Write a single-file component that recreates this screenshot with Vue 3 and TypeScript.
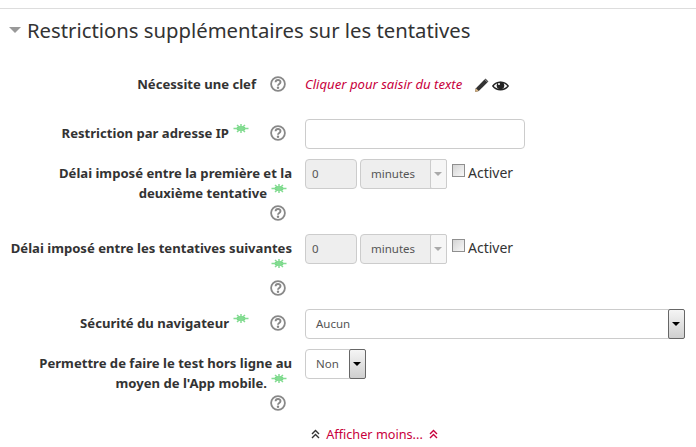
<script setup lang="ts">
interface Row {
  lines: string[]
  required: boolean
  stacked: boolean
  kind: string
}

const rows: Row[] = [
  { lines: ['Nécessite une clef'], required: false, stacked: false, kind: 'inline-edit' },
  { lines: ['Restriction par adresse IP'], required: true, stacked: false, kind: 'text' },
  { lines: ['Délai imposé entre la première et la', 'deuxième tentative'], required: true, stacked: true, kind: 'duration' },
  { lines: ['Délai imposé entre les tentatives suivantes', ''], required: true, stacked: true, kind: 'duration' },
  { lines: ['Sécurité du navigateur'], required: true, stacked: false, kind: 'browser' },
  { lines: ['Permettre de faire le test hors ligne au', "moyen de l'App mobile."], required: true, stacked: true, kind: 'offline' },
]
</script>

<template>
  <div class="page">
    <h2 class="section-title">
      <span class="caret"></span>
      Restrictions supplémentaires sur les tentatives
    </h2>

    <div class="form">
      <div v-for="(row, i) in rows" :key="i" class="row" :class="'row-' + row.kind">
        <div class="label-col">
          <template v-for="(line, j) in row.lines" :key="j">
            <br v-if="j > 0" />
            <span class="label-text">{{ line }}</span>
          </template>
          <svg v-if="row.required" class="req" width="16" height="9" viewBox="0 0 16 9">
            <ellipse cx="8" cy="4.500" rx="4.500" ry="2.500" fill="#6ed47f" />
            <path d="M.5 4.500h15M4 1l8 7M12 1L4 8M8 0v9" stroke="#84dc92" stroke-width="1.500" fill="none" />
          </svg>
          <br v-if="row.stacked" />
          <svg class="help" :class="{ 'help-stacked': row.stacked }" width="16" height="16" viewBox="0 0 16 16">
            <circle cx="8" cy="8" r="6.900" fill="none" stroke="#888" stroke-width="1.800" />
            <path d="M5.600 6.300c0-3.100 4.900-3.100 4.900-.2 0 1.900-2.500 1.900-2.500 3.700" fill="none" stroke="#888" stroke-width="1.900" />
            <circle cx="8" cy="11.800" r="1.200" fill="#888" />
          </svg>
        </div>

        <div class="field-col">
          <template v-if="row.kind === 'inline-edit'">
            <span class="click-text">Cliquer pour saisir du texte</span>
            <svg class="pencil" width="15" height="15" viewBox="0 0 14 14">
              <path d="M1 13l.8-3.500L9.800 1.500l2.700 2.700-8 8z" fill="#333" />
              <path d="M1 13l.8-3.500 2.700 2.700z" fill="#d9b380" />
              <path d="M9.800 1.500l1-1 2.700 2.700-1 1z" fill="#555" />
            </svg>
            <svg class="eye" width="17" height="12" viewBox="0 0 17 12">
              <path d="M.8 6C4.500 1 12.500 1 16.200 6 12.500 11 4.500 11 .8 6z" fill="#fff" stroke="#222" stroke-width="1.300" />
              <circle cx="8.500" cy="5.500" r="3.800" fill="#222" />
              <circle cx="7" cy="4" r="1" fill="#fff" />
            </svg>
          </template>

          <div v-else-if="row.kind === 'text'" class="text-input"></div>

          <template v-else-if="row.kind === 'duration'">
            <div class="number-box">0</div>
            <div class="select disabled unit">
              <span class="value">minutes</span>
              <span class="arrow"></span>
            </div>
            <input class="check" type="checkbox" />
            <span class="check-label">Activer</span>
          </template>

          <div v-else-if="row.kind === 'browser'" class="select wide">
            <span class="value">Aucun</span>
            <span class="arrow"></span>
          </div>

          <div v-else class="select small">
            <span class="value">Non</span>
            <span class="arrow"></span>
          </div>
        </div>
      </div>
    </div>

    <div class="more-link">
      <svg width="9" height="10" viewBox="0 0 9 10">
        <path d="M1 5l3.500-3.500L8 5M1 9l3.500-3.500L8 9" fill="none" stroke="#333" stroke-width="1.400" />
      </svg>
      <span class="more-text">Afficher moins...</span>
      <svg width="9" height="10" viewBox="0 0 9 10">
        <path d="M1 5l3.500-3.500L8 5M1 9l3.500-3.500L8 9" fill="none" stroke="#c8003c" stroke-width="1.400" />
      </svg>
    </div>
  </div>
</template>

<style>
html,
body {
  margin: 0;
  background: #fff;
}
</style>

<style scoped>
.page {
  width: 696px;
  height: 447px;
  overflow: hidden;
  box-sizing: border-box;
  padding-top: 8px;
  font-family: "Noto Sans", "Open Sans", sans-serif;
  color: #333;
}

.section-title {
  margin: 0;
  height: 41px;
  padding-left: 9px;
  border-top: 1px solid #ddd;
  display: flex;
  align-items: center;
  gap: 6px;
  font-size: 20.300px;
  font-weight: 400;
  color: #333;
  white-space: nowrap;
}

.caret {
  width: 0;
  height: 0;
  border-left: 6px solid transparent;
  border-right: 6px solid transparent;
  border-top: 6px solid #999;
}

.form {
  padding-top: 20px;
}

.row {
  display: flex;
  align-items: flex-start;
}

.row-inline-edit {
  height: 49px;
}

.row-text {
  height: 40px;
}

.row-duration {
  height: 75px;
}

.row-browser {
  height: 40px;
}

.row-offline {
  height: 75px;
}

.label-col {
  width: 292px;
  flex: none;
  text-align: right;
  font-size: 13.100px;
  font-weight: 700;
  line-height: 20px;
  padding-top: 4px;
  color: #333;
}

.req {
  margin-left: 4px;
  margin-right: 5px;
  vertical-align: 5px;
}

.help {
  margin-left: 14px;
  margin-right: 6px;
  vertical-align: -3px;
}

.req + .help {
  margin-left: 16px;
}

.help-stacked,
.req + br + .help {
  margin-left: 0;
  margin-top: 2px;
}

.field-col {
  margin-left: 13px;
  display: flex;
  align-items: flex-start;
}

.click-text {
  font-size: 13.150px;
  font-style: italic;
  color: #c8003c;
  margin-top: 5px;
}

.pencil {
  margin: 8px 0 0 12px;
}

.eye {
  margin: 10px 0 0 3px;
}

.text-input {
  width: 220px;
  height: 30px;
  box-sizing: border-box;
  border: 1px solid #ccc;
  border-radius: 4px;
}

.number-box {
  width: 52px;
  height: 30px;
  box-sizing: border-box;
  padding: 0 6px;
  line-height: 28px;
  font-size: 11.500px;
  background: #eee;
  border: 1px solid #ccc;
  border-radius: 4px;
  color: #555;
}

.select {
  height: 30px;
  box-sizing: border-box;
  display: flex;
  justify-content: space-between;
  border: 1px solid #ccc;
  border-radius: 4px;
  font-size: 11.500px;
  color: #555;
  background: #fff;
}

.value {
  padding-left: 10px;
  line-height: 28px;
}

.arrow {
  width: 17px;
  box-sizing: border-box;
  flex: none;
  margin: -1px -1px -1px 0;
  border: 1px solid #666;
  border-radius: 2px;
  background: linear-gradient(#f5f5f5, #cfcfcf);
  position: relative;
}

.arrow::after {
  content: "";
  position: absolute;
  left: 3px;
  top: 12px;
  border-left: 4px solid transparent;
  border-right: 4px solid transparent;
  border-top: 4px solid #000;
}

.unit {
  width: 87px;
  margin-left: 3px;
}

.disabled {
  background: #eee;
}

.disabled .arrow {
  border-color: #ccc;
  background: #f6f6f6;
}

.disabled .arrow::after {
  border-top-color: #aaa;
}

.wide {
  width: 380px;
}

.small {
  width: 61px;
}

.check {
  appearance: none;
  width: 13px;
  height: 13px;
  margin: 5px 0 0 5px;
  border: 1px solid #8f8f8f;
  background: linear-gradient(135deg, #d4d4d4, #f8f8f8);
}

.check-label {
  margin-left: 3px;
  font-size: 14px;
  line-height: 20px;
  margin-top: 4px;
  color: #333;
}

.more-link {
  margin-top: 0;
  display: flex;
  align-items: center;
  justify-content: center;
  padding-left: 53px;
  gap: 6px;
  font-size: 12.700px;
  line-height: 20px;
}

.more-text {
  color: #c8003c;
}
</style>
